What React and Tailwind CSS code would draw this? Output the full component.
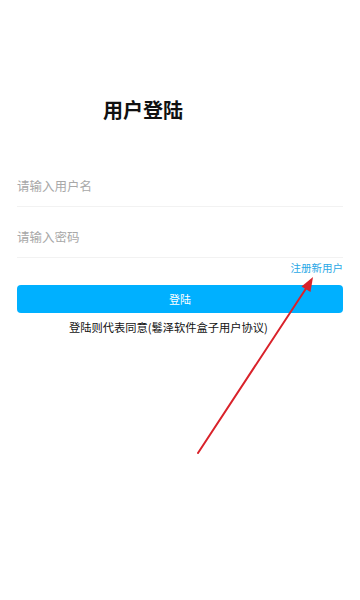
const font = { fontFamily: '"Noto Sans CJK SC", "Noto Sans", sans-serif' };

const Arrow = () => (
  <svg className="absolute left-0 top-0 pointer-events-none" width="360" height="600" viewBox="0 0 360 600">
    <line x1="198" y1="453" x2="307" y2="287" stroke="#d9222a" strokeWidth="2" strokeLinecap="round" />
    <polygon points="313,277 310.5,292 301.5,286.5" fill="#d9222a" />
  </svg>
);

export default function App() {
  return (
    <div className="relative w-[360px] h-[600px] bg-white overflow-hidden" style={font}>
      <div className="px-[17px]">
        <h1 className="pt-[96px] pl-[86px] text-[20px] leading-[28px] font-bold text-[#111]">用户登陆</h1>

        <div className="mt-[42px] h-[41px] flex items-center border-b border-[#f2f2f2]">
          <span className="text-[12.5px] text-[#a8a8a8]">请输入用户名</span>
        </div>
        <div className="h-[51px] pt-[10px] flex items-center border-b border-[#f2f2f2]">
          <span className="text-[12.5px] text-[#a8a8a8]">请输入密码</span>
        </div>

        <div className="mt-[2px] flex justify-end">
          <span className="text-[10.5px] leading-[16px] text-[#2aa8e6]">注册新用户</span>
        </div>

        <button className="mt-[9px] w-full h-[28px] rounded-[4px] bg-[#00b0ff] text-white text-[11px] flex items-center justify-center">
          登陆
        </button>

        <p className="mt-[6px] pl-[52px] text-[11.25px] leading-[16px] text-[#111]">
          登陆则代表同意(鬈泽软件盒子用户协议)
        </p>
      </div>
      <Arrow />
    </div>
  );
}
